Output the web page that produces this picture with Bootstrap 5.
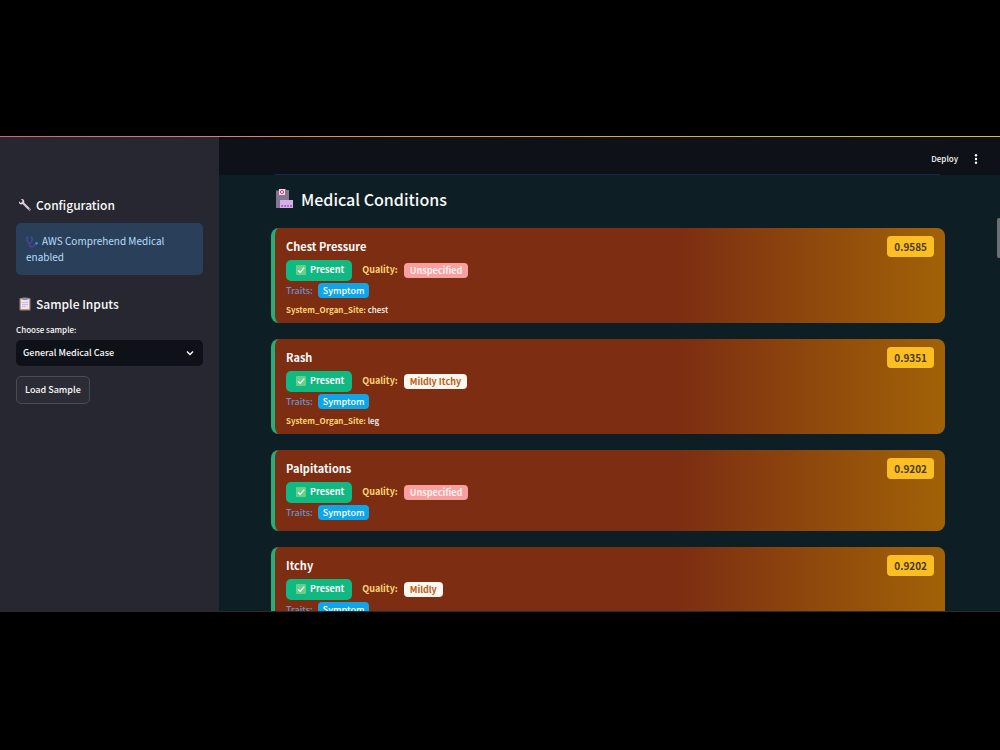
<!DOCTYPE html>
<html lang="en">
<head>
<meta charset="utf-8">
<meta name="viewport" content="width=device-width, initial-scale=1">
<title>Medical Conditions</title>
<link href="https://cdn.jsdelivr.net/npm/bootstrap@5.3.0/dist/css/bootstrap.min.css" rel="stylesheet">
<style>
  body { font-family: "Noto Sans CJK JP", "Noto Sans CJK SC", sans-serif; font-size: 9px; font-weight: 500; line-height: 16px; background: #000; color: #fafafa; }
  /* wide app frame, letterboxed in the window */
  .stage { padding-bottom: 2px; }
  .app-frame { aspect-ratio: 21 / 10; background: #0d1f25; border-bottom: 1px solid #2c2b28; }
  .top-line { height: 1px; background: linear-gradient(90deg, #e0606a, #e0955f 40%, #d4c04a); flex: none; }
  .side { width: 219px; background: #262730; padding: 58px 16px 0; }
  .side h2 { font-size: 12px; line-height: 20px; font-weight: 500; }
  .side h2 svg { margin: 0 4px 0 2px; }
  .info-box { background: #2a3f59; color: #b5dffa; border-radius: 5px; padding: 10px; margin-bottom: 19px; font-size: 10px; font-weight: 400; }
  .form-label { font-size: 8px; margin: 8px 0 2px; font-weight: 500; }
  .form-select { background-color: #0e1117; color: #fafafa; border: 0; border-radius: 5px; font-size: 9px; font-weight: 500; line-height: 16px; padding: 5px 20px 5px 7px; margin-bottom: 10px;
    background-image: url("data:image/svg+xml,%3Csvg xmlns='http://www.w3.org/2000/svg' viewBox='0 0 8 8'%3E%3Cpath d='M1 2.5l3 3 3-3' fill='none' stroke='%23fff' stroke-width='1.4'/%3E%3C/svg%3E"); background-size: 8px; background-position: right 9px center; }
  .load-btn { color: #fafafa; background: #2b2c36; border: 1px solid #4a4b54; border-radius: 5px; font-size: 9px; font-weight: 500; line-height: 16px; padding: 5px 8px; }
  .bar { height: 38px; background: #0e1117; padding: 6px 18px 0 0; flex: none; }
  .bar button { font-size: 8px; font-weight: 500; color: #fafafa; line-height: 16px; }
  .menu-btn { margin-left: 12px; }
  .pane { padding: 0 55px 0 52px; }
  .rule { height: 1px; background: #1a2547; margin: -1px 5px 0 4px; }
  .pane h1 { font-size: 16px; line-height: 26px; font-weight: 500; margin: 11px 0 16px 5px; }
  .entity { border-left: 4px solid #27ae76; border-radius: 8px; background: linear-gradient(90deg, #7c2d12 60%, #a16207) border-box; padding: 8px 11px 6px; margin-bottom: 16px; }
  .entity h3 { font-size: 11px; line-height: 21px; font-weight: 700; margin: 0 0 3px; }
  .score { background: #fbbf24; color: #49391a; border-radius: 4px; font-size: 10px; font-weight: 700; line-height: 21px; padding: 0 7px; height: 21px; }
  .present { background: #10b981; border-radius: 5px; font-weight: 700; height: 21px; padding: 0 8px 0 10px; margin-right: 10px; }
  .q-label { color: #fcd572; font-weight: 700; margin-right: 6px; }
  .chip { border-radius: 4px; line-height: 15px; height: 15px; padding: 0 6px; }
  .chip-none { background: #fa9f9f; color: #fff1ee; font-weight: 700; }
  .chip-val { background: #fff7ed; color: #b45f1c; font-weight: 700; }
  .chip-trait { background: #0ea5e9; color: #fff; padding: 0 5px; }
  .t-label { color: #6a93c9; margin-right: 5px; }
  .traits { height: 20px; margin-bottom: 2px; }
  .site { font-size: 8px; line-height: 14px; height: 14px; }
  .site b { color: #fcd572; font-weight: 700; }
  .thumb { position: absolute; right: 0; top: 82px; width: 3px; height: 40px; background: #6b7076; border-radius: 2px 0 0 2px; }
</style>
</head>
<body>
<svg width="0" height="0" class="position-absolute" aria-hidden="true">
  <symbol id="check" viewBox="0 0 10 10"><rect width="10" height="10" rx="1" fill="#66d089"/><path d="M2 5.2l2.2 2.2L8.2 2.6" fill="none" stroke="#fff" stroke-width="1.3"/></symbol>
</svg>
<div class="stage min-vh-100 d-flex flex-column justify-content-center">
<div class="app-frame position-relative overflow-hidden d-flex flex-column">
  <div class="top-line"></div>
  <div class="d-flex flex-grow-1" style="min-height:0">
    <aside class="side flex-shrink-0">
      <h2 class="d-flex align-items-center mb-2"><svg width="14" height="14" viewBox="0 0 14 14"><path d="M4.5 4.5l7 7" stroke="#d5c5dc" stroke-width="2.4" stroke-linecap="round"/><path d="M3 1.2l1.8 1.8-.3 1.7-1.7.2L1 3.2C.5 5 2 6.8 4.2 6.3L6.3 4.2C6.7 2 5 .5 3 1.2z" fill="#e4d8e8"/><circle cx="11.3" cy="11.3" r=".8" fill="#555061"/></svg>Configuration</h2>
      <div class="info-box"><svg class="me-1" width="12" height="12" viewBox="0 0 12 12" fill="none"><path d="M2 1H1v3c0 4 5 4 5 0V1H5" stroke="#4a57b5"/><path d="M3.5 7v1.5c0 3 5 3 5 .3V8" stroke="#5b3aa8" stroke-width="1.3"/><circle cx="10.5" cy="7.3" r="1.4" fill="#2a91e4"/></svg>AWS Comprehend Medical enabled</div>
      <h2 class="d-flex align-items-center mb-0"><svg width="14" height="14" viewBox="0 0 14 14"><rect x="1.5" y="1" width="11" height="12.5" rx="1" fill="#b77f63"/><path d="M2.7 2.2h8.6v10H2.7z" fill="#e9e3f6"/><path d="M4.5 .5h5v2.5h-5z" fill="#8a8ba4"/><path d="M4 5.5h6M4 7.5h6M4 9.5h4" stroke="#b9b3da" stroke-width=".8"/></svg>Sample Inputs</h2>
      <label class="form-label d-block" for="sample">Choose sample:</label>
      <select class="form-select" id="sample"><option>General Medical Case</option></select>
      <button class="load-btn btn" type="button">Load Sample</button>
    </aside>
    <main class="flex-grow-1">
      <header class="bar d-flex align-items-center justify-content-end">
        <button class="btn border-0 p-0" type="button">Deploy</button>
        <button class="menu-btn btn border-0 p-0 d-flex" type="button" aria-label="Menu"><svg width="12" height="10" viewBox="0 0 12 10" fill="#fff"><circle cx="6" cy="1.3" r="1.2"/><circle cx="6" cy="5" r="1.2"/><circle cx="6" cy="8.7" r="1.2"/></svg></button>
      </header>
      <div class="pane">
        <div class="rule"></div>
        <h1 class="d-flex align-items-center"><svg class="me-2" width="17" height="19" viewBox="0 0 17 19"><path d="M0 1.5h3V0h7v1h3v18H0z" fill="#85758f"/><path d="M3 0h6v6H3z" fill="#f1dbed"/><circle cx="6" cy="3" r="1.6" fill="none" stroke="#d43f7c"/><path d="M4 11h13v8H4z" fill="#d5adeb"/><path d="M5 17h11" stroke="#9b54b5" stroke-width="1.5" stroke-dasharray="2 1"/></svg>Medical Conditions</h1>

        <article class="entity">
          <div class="d-flex justify-content-between"><h3>Chest Pressure</h3><span class="score">0.9585</span></div>
          <div class="d-flex align-items-center"><span class="present d-flex align-items-center"><svg class="me-1" width="10" height="10"><use href="#check"/></svg>Present</span><span class="q-label">Quality:</span><span class="chip chip-none">Unspecified</span></div>
          <div class="traits d-flex align-items-center"><span class="t-label">Traits:</span><span class="chip chip-trait">Symptom</span></div>
          <div class="site"><b>System_Organ_Site:</b> chest</div>
        </article>
        <article class="entity">
          <div class="d-flex justify-content-between"><h3>Rash</h3><span class="score">0.9351</span></div>
          <div class="d-flex align-items-center"><span class="present d-flex align-items-center"><svg class="me-1" width="10" height="10"><use href="#check"/></svg>Present</span><span class="q-label">Quality:</span><span class="chip chip-val">Mildly Itchy</span></div>
          <div class="traits d-flex align-items-center"><span class="t-label">Traits:</span><span class="chip chip-trait">Symptom</span></div>
          <div class="site"><b>System_Organ_Site:</b> leg</div>
        </article>
        <article class="entity">
          <div class="d-flex justify-content-between"><h3>Palpitations</h3><span class="score">0.9202</span></div>
          <div class="d-flex align-items-center"><span class="present d-flex align-items-center"><svg class="me-1" width="10" height="10"><use href="#check"/></svg>Present</span><span class="q-label">Quality:</span><span class="chip chip-none">Unspecified</span></div>
          <div class="traits d-flex align-items-center"><span class="t-label">Traits:</span><span class="chip chip-trait">Symptom</span></div>
        </article>
        <article class="entity">
          <div class="d-flex justify-content-between"><h3>Itchy</h3><span class="score">0.9202</span></div>
          <div class="d-flex align-items-center"><span class="present d-flex align-items-center"><svg class="me-1" width="10" height="10"><use href="#check"/></svg>Present</span><span class="q-label">Quality:</span><span class="chip chip-val">Mildly</span></div>
          <div class="traits d-flex align-items-center"><span class="t-label">Traits:</span><span class="chip chip-trait">Symptom</span></div>
        </article>
      </div>
    </main>
  </div>
  <div class="thumb"></div>
</div>
</div>
<script src="https://cdn.jsdelivr.net/npm/bootstrap@5.3.0/dist/js/bootstrap.bundle.min.js"></script>
</body>
</html>
